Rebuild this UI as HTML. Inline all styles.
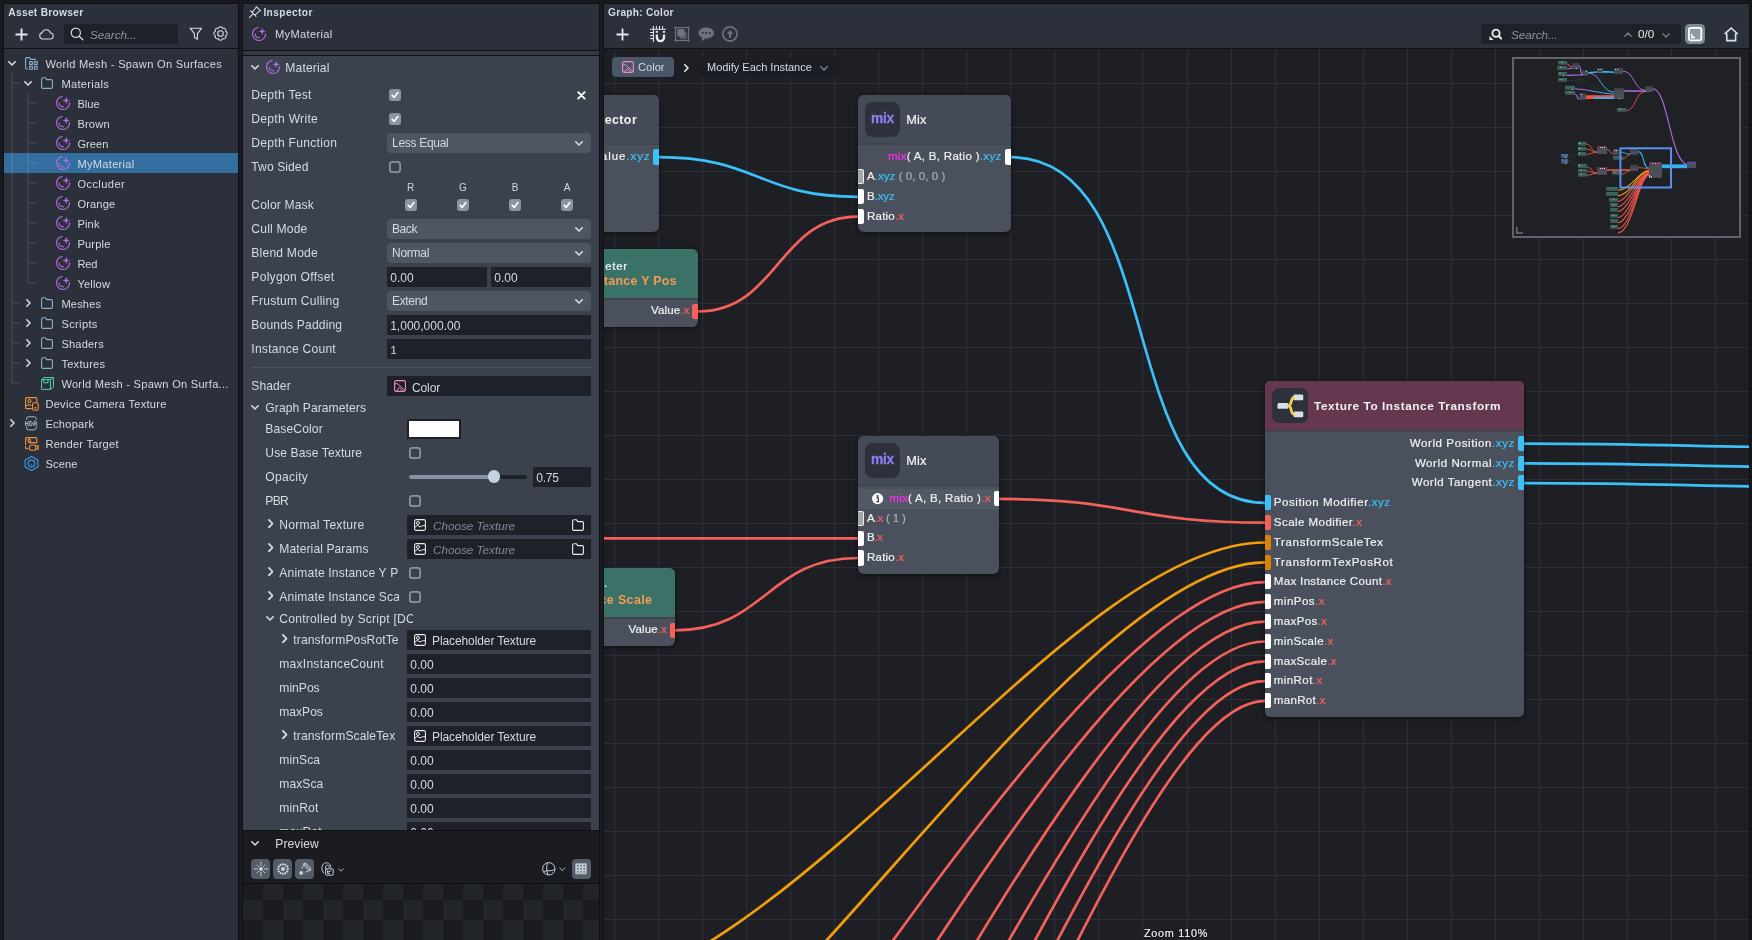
<!DOCTYPE html><html><head><meta charset="utf-8"><title>Editor</title><style>
*{box-sizing:border-box;margin:0;padding:0}
html,body{width:1752px;height:940px;overflow:hidden;background:#0f1013}
body{font-family:"Liberation Sans",sans-serif;color:#d5dae1;position:relative;font-size:11.7px}
.abs{position:absolute}
.t{position:absolute;white-space:pre;line-height:14px;height:14px}
.panel{position:absolute;background:#2c303a}
svg{position:absolute;overflow:visible}
.ic{position:absolute}
</style></head><body>
<svg width="0" height="0" style="position:absolute">
<defs>
<symbol id="mat" viewBox="0 0 14 14"><g fill="none" stroke="currentColor" stroke-width="1.1" stroke-linecap="round">
<path d="M6.19 0.53 A6.5 6.5 0 1 0 13.55 6.74"/>
<path d="M3.1 6.9 A3.9 3.9 0 0 0 7.7 10.7"/></g>
<path fill="currentColor" d="M10.2 0.9 L11.15 3.45 L13.8 4.4 L11.15 5.35 L10.2 7.9 L9.25 5.35 L6.6 4.4 L9.25 3.45 Z"/></symbol>
<symbol id="folder" viewBox="0 0 12 12"><path fill="none" stroke="currentColor" stroke-width="1.1" stroke-linejoin="round" d="M0.6 2 Q0.6 0.7 1.9 0.7 H4.2 L5.8 2.6 H10.2 Q11.4 2.6 11.4 3.8 V10.2 Q11.4 11.4 10.2 11.4 H1.8 Q0.6 11.4 0.6 10.2 Z"/></symbol>
<symbol id="pkg" viewBox="0 0 13 13"><g fill="none" stroke="currentColor" stroke-width="1.1" stroke-linejoin="round" stroke-linecap="round">
<path d="M2.6 12 H1.9 Q0.6 12 0.6 10.7 V1.9 Q0.6 0.6 1.9 0.6 H4.4 L6 2.4 H10.6"/>
<rect x="4.6" y="4.6" width="2.8" height="2.8"/><rect x="9.4" y="4.6" width="2.8" height="2.8"/><rect x="4.6" y="9.4" width="2.8" height="2.8"/><rect x="9.4" y="9.4" width="2.8" height="2.8"/></g></symbol>
<symbol id="chd" viewBox="0 0 8 5"><path fill="none" stroke="currentColor" stroke-width="1.6" stroke-linecap="round" stroke-linejoin="round" d="M0.8 0.8 L4 4 L7.2 0.8"/></symbol>
<symbol id="chr" viewBox="0 0 5 8"><path fill="none" stroke="currentColor" stroke-width="1.6" stroke-linecap="round" stroke-linejoin="round" d="M0.8 0.8 L4 4 L0.8 7.2"/></symbol>
</defs></svg>
<div style="position:absolute;left:0;top:0;width:1752px;height:940px;will-change:transform"><div class="abs" style="left:0;top:0;width:1752px;height:3px;background:#17191e"></div>
<div class="abs" style="left:0;top:0;width:3px;height:940px;background:#17191e"></div>
<div class="abs" style="left:1750px;top:0;width:2px;height:940px;background:#15171b"></div>
<div class="abs" style="left:239.2px;top:3px;width:2.5px;height:937px;background:#1a1c21"></div>
<div class="abs" style="left:600.2px;top:3px;width:2.8px;height:937px;background:#1a1c21"></div>
<div class="panel" style="left:4px;top:4px;width:234.3px;height:44px"></div>
<div class="panel" style="left:4px;top:49px;width:234.3px;height:891px"></div>
<div class="t " style="left:8.3px;top:5.6px;font-size:10.2px;letter-spacing:0.298px;font-weight:700;color:#d5dae1">Asset Browser</div>
<svg style="left:15px;top:28px" width="13" height="13"><path d="M6.5 0.5V12.5M0.5 6.5H12.5" stroke="#e3e6ea" stroke-width="1.9" fill="none"/></svg>
<svg style="left:38px;top:28px" width="16" height="12"><path d="M4.2 11 H12 A3 3 0 0 0 12.4 5 A4.3 4.3 0 0 0 4.2 4.6 A3.3 3.3 0 0 0 4.2 11 Z" stroke="#d5dae1" stroke-width="1.1" fill="none" stroke-linejoin="round"/></svg>
<div class="abs" style="left:64px;top:24px;width:114px;height:20px;background:#1e2128;border-radius:2px"></div>
<svg style="left:70px;top:27px" width="14" height="14"><circle cx="5.8" cy="5.8" r="4.6" stroke="#d5dae1" stroke-width="1.2" fill="none"/><path d="M9.2 9.2 L12.8 12.8" stroke="#d5dae1" stroke-width="1.3" stroke-linecap="round"/></svg>
<div class="t " style="left:90px;top:27.799999999999997px;font-style:italic;color:#8e96a3;font-size:11.7px">Search...</div>
<svg style="left:189px;top:27px" width="14" height="14"><path d="M1 1.2 H12.6 L8.4 6.6 V12.2 L5.4 10.6 V6.6 Z" stroke="#d5dae1" stroke-width="1.1" fill="none" stroke-linejoin="round"/></svg>
<svg style="left:212.5px;top:26.4px" width="15" height="15"><circle cx="7.5" cy="7.5" r="2.8" stroke="#d5dae1" stroke-width="1.1" fill="none"/><path d="M14.15 7.50 L14.12 7.85 L14.05 8.19 L13.92 8.52 L13.73 8.82 L13.49 9.11 L13.19 9.35 L12.78 9.53 L12.67 9.80 L12.83 10.22 L12.87 10.60 L12.84 10.97 L12.76 11.32 L12.62 11.64 L12.43 11.94 L12.20 12.20 L11.94 12.43 L11.64 12.62 L11.32 12.76 L10.97 12.84 L10.60 12.87 L10.22 12.83 L9.80 12.67 L9.53 12.78 L9.35 13.19 L9.11 13.49 L8.82 13.73 L8.52 13.92 L8.19 14.05 L7.85 14.12 L7.50 14.15 L7.15 14.12 L6.81 14.05 L6.48 13.92 L6.18 13.73 L5.89 13.49 L5.65 13.19 L5.47 12.78 L5.20 12.67 L4.78 12.83 L4.40 12.87 L4.03 12.84 L3.68 12.76 L3.36 12.62 L3.06 12.43 L2.80 12.20 L2.57 11.94 L2.38 11.64 L2.24 11.32 L2.16 10.97 L2.13 10.60 L2.17 10.22 L2.33 9.80 L2.22 9.53 L1.81 9.35 L1.51 9.11 L1.27 8.82 L1.08 8.52 L0.95 8.19 L0.88 7.85 L0.85 7.50 L0.88 7.15 L0.95 6.81 L1.08 6.48 L1.27 6.18 L1.51 5.89 L1.81 5.65 L2.22 5.47 L2.33 5.20 L2.17 4.78 L2.13 4.40 L2.16 4.03 L2.24 3.68 L2.38 3.36 L2.57 3.06 L2.80 2.80 L3.06 2.57 L3.36 2.38 L3.68 2.24 L4.03 2.16 L4.40 2.13 L4.78 2.17 L5.20 2.33 L5.47 2.22 L5.65 1.81 L5.89 1.51 L6.18 1.27 L6.48 1.08 L6.81 0.95 L7.15 0.88 L7.50 0.85 L7.85 0.88 L8.19 0.95 L8.52 1.08 L8.82 1.27 L9.11 1.51 L9.35 1.81 L9.53 2.22 L9.80 2.33 L10.22 2.17 L10.60 2.13 L10.97 2.16 L11.32 2.24 L11.64 2.38 L11.94 2.57 L12.20 2.80 L12.43 3.06 L12.62 3.36 L12.76 3.68 L12.84 4.03 L12.87 4.40 L12.83 4.78 L12.67 5.20 L12.78 5.47 L13.19 5.65 L13.49 5.89 L13.73 6.18 L13.92 6.48 L14.05 6.81 L14.12 7.15 Z" stroke="#d5dae1" stroke-width="1.05" fill="none" stroke-linejoin="round"/></svg>
<div class="abs" style="left:4px;top:153px;width:234.3px;height:20px;background:#336f9e"></div>
<div class="abs" style="left:11px;top:73px;width:2px;height:311px;background:rgba(255,255,255,0.07)"></div>
<div class="abs" style="left:27px;top:93px;width:2px;height:191px;background:rgba(255,255,255,0.07)"></div>
<div class="abs" style="left:13px;top:82px;width:7px;height:2px;background:rgba(255,255,255,0.07)"></div>
<div class="abs" style="left:13px;top:302px;width:7px;height:2px;background:rgba(255,255,255,0.07)"></div>
<div class="abs" style="left:13px;top:322px;width:7px;height:2px;background:rgba(255,255,255,0.07)"></div>
<div class="abs" style="left:13px;top:342px;width:7px;height:2px;background:rgba(255,255,255,0.07)"></div>
<div class="abs" style="left:13px;top:362px;width:7px;height:2px;background:rgba(255,255,255,0.07)"></div>
<div class="abs" style="left:13px;top:382px;width:7px;height:2px;background:rgba(255,255,255,0.07)"></div>
<div class="abs" style="left:29px;top:102px;width:7.5px;height:2px;background:rgba(255,255,255,0.07)"></div>
<div class="abs" style="left:29px;top:122px;width:7.5px;height:2px;background:rgba(255,255,255,0.07)"></div>
<div class="abs" style="left:29px;top:142px;width:7.5px;height:2px;background:rgba(255,255,255,0.07)"></div>
<div class="abs" style="left:29px;top:162px;width:7.5px;height:2px;background:rgba(255,255,255,0.07)"></div>
<div class="abs" style="left:29px;top:182px;width:7.5px;height:2px;background:rgba(255,255,255,0.07)"></div>
<div class="abs" style="left:29px;top:202px;width:7.5px;height:2px;background:rgba(255,255,255,0.07)"></div>
<div class="abs" style="left:29px;top:222px;width:7.5px;height:2px;background:rgba(255,255,255,0.07)"></div>
<div class="abs" style="left:29px;top:242px;width:7.5px;height:2px;background:rgba(255,255,255,0.07)"></div>
<div class="abs" style="left:29px;top:262px;width:7.5px;height:2px;background:rgba(255,255,255,0.07)"></div>
<div class="abs" style="left:29px;top:282px;width:7.5px;height:2px;background:rgba(255,255,255,0.07)"></div>
<svg class="ic" style="left:8px;top:61px;color:#d5dae1" width="8" height="5"><use href="#chd"/></svg>
<svg class="ic" style="left:25px;top:57px;color:#86afd1" width="13" height="13"><use href="#pkg"/></svg>
<div class="t " style="left:45.4px;top:57.099999999999994px;font-size:11.1px;letter-spacing:0.303px;">World Mesh - Spawn On Surfaces</div>
<svg class="ic" style="left:24px;top:81px;color:#d5dae1" width="8" height="5"><use href="#chd"/></svg>
<svg class="ic" style="left:41px;top:77px;color:#86afd1" width="12" height="12"><use href="#folder"/></svg>
<div class="t " style="left:61.4px;top:77.1px;font-size:11.1px;letter-spacing:0.297px;">Materials</div>
<svg class="ic" style="left:56px;top:96px;color:#b56be4" width="14" height="14"><use href="#mat"/></svg>
<div class="t " style="left:77.4px;top:97.1px;font-size:11.1px;letter-spacing:-0.004px;">Blue</div>
<svg class="ic" style="left:56px;top:116px;color:#b56be4" width="14" height="14"><use href="#mat"/></svg>
<div class="t " style="left:77.4px;top:117.1px;font-size:11.1px;letter-spacing:0.187px;">Brown</div>
<svg class="ic" style="left:56px;top:136px;color:#b56be4" width="14" height="14"><use href="#mat"/></svg>
<div class="t " style="left:77.4px;top:137.1px;font-size:11.1px;letter-spacing:0.050px;">Green</div>
<svg class="ic" style="left:56px;top:156px;color:#b56be4" width="14" height="14"><use href="#mat"/></svg>
<div class="t " style="left:77.4px;top:157.1px;font-size:11.1px;letter-spacing:0.292px;">MyMaterial</div>
<svg class="ic" style="left:56px;top:176px;color:#b56be4" width="14" height="14"><use href="#mat"/></svg>
<div class="t " style="left:77.4px;top:177.1px;font-size:11.1px;letter-spacing:0.410px;">Occluder</div>
<svg class="ic" style="left:56px;top:196px;color:#b56be4" width="14" height="14"><use href="#mat"/></svg>
<div class="t " style="left:77.4px;top:197.1px;font-size:11.1px;letter-spacing:0.163px;">Orange</div>
<svg class="ic" style="left:56px;top:216px;color:#b56be4" width="14" height="14"><use href="#mat"/></svg>
<div class="t " style="left:77.4px;top:217.1px;font-size:11.1px;letter-spacing:0.152px;">Pink</div>
<svg class="ic" style="left:56px;top:236px;color:#b56be4" width="14" height="14"><use href="#mat"/></svg>
<div class="t " style="left:77.4px;top:237.1px;font-size:11.1px;letter-spacing:0.186px;">Purple</div>
<svg class="ic" style="left:56px;top:256px;color:#b56be4" width="14" height="14"><use href="#mat"/></svg>
<div class="t " style="left:77.4px;top:257.1px;font-size:11.1px;letter-spacing:-0.121px;">Red</div>
<svg class="ic" style="left:56px;top:276px;color:#b56be4" width="14" height="14"><use href="#mat"/></svg>
<div class="t " style="left:77.4px;top:277.1px;font-size:11.1px;letter-spacing:0.170px;">Yellow</div>
<svg class="ic" style="left:26px;top:299px;color:#d5dae1" width="5" height="8"><use href="#chr"/></svg>
<svg class="ic" style="left:41px;top:297px;color:#86afd1" width="12" height="12"><use href="#folder"/></svg>
<div class="t " style="left:61.4px;top:297.1px;font-size:11.1px;letter-spacing:0.172px;">Meshes</div>
<svg class="ic" style="left:26px;top:319px;color:#d5dae1" width="5" height="8"><use href="#chr"/></svg>
<svg class="ic" style="left:41px;top:317px;color:#86afd1" width="12" height="12"><use href="#folder"/></svg>
<div class="t " style="left:61.4px;top:317.1px;font-size:11.1px;letter-spacing:0.354px;">Scripts</div>
<svg class="ic" style="left:26px;top:339px;color:#d5dae1" width="5" height="8"><use href="#chr"/></svg>
<svg class="ic" style="left:41px;top:337px;color:#86afd1" width="12" height="12"><use href="#folder"/></svg>
<div class="t " style="left:61.4px;top:337.1px;font-size:11.1px;letter-spacing:0.179px;">Shaders</div>
<svg class="ic" style="left:26px;top:359px;color:#d5dae1" width="5" height="8"><use href="#chr"/></svg>
<svg class="ic" style="left:41px;top:357px;color:#86afd1" width="12" height="12"><use href="#folder"/></svg>
<div class="t " style="left:61.4px;top:357.1px;font-size:11.1px;letter-spacing:0.244px;">Textures</div>
<svg style="left:41px;top:377px" width="13" height="13"><g fill="none" stroke="#55d2a2" stroke-width="1" stroke-linejoin="round"><path d="M0.6 2.6 H9.4 V12.4 H0.6 Z M0.6 2.6 L3 0.6 H12.4 L9.4 2.6 M12.4 0.6 V10 L9.4 12.4 M2.8 2.8 V5.8 H7 V2.8"/></g></svg>
<svg style="left:25px;top:397px" width="14" height="14"><g fill="none" stroke="#f2913a" stroke-width="1.1" stroke-linejoin="round" stroke-linecap="round"><path d="M6.4 11.6 H1.8 Q0.6 11.6 0.6 10.4 V1.8 Q0.6 0.6 1.8 0.6 H10.6 Q11.8 0.6 11.8 1.8 V4.4"/><circle cx="4.4" cy="4" r="1.5"/><path d="M0.8 9 L4 7.6 L6 8.4"/><rect x="7.6" y="5.8" width="5.6" height="7.4" rx="1.4"/></g><rect x="9.6" y="10" width="1.7" height="1.7" fill="#f2913a"/></svg>
<svg style="left:25px;top:416px" width="13" height="15"><g fill="none" stroke="#b6cde4" stroke-width="0.85" stroke-linecap="round"><path d="M1.6 3.6 V2.6 Q1.6 0.8 3.4 0.8 H9.4 Q11.2 0.8 11.2 2.6 V3.6 M1.6 11 V12 Q1.6 13.8 3.4 13.8 H9.4 Q11.2 13.8 11.2 12 V11"/><path d="M0.6 5.4 V9.8 M0.6 7.6 H3 M3 5.4 V9.8 M4.8 5.4 V9.8 H5.6 Q7.2 9.8 7.2 7.6 Q7.2 5.4 5.6 5.4 H4.8 M9 9.8 V5.4 H10.4 Q11.8 5.4 11.8 6.6 Q11.8 7.8 10.4 7.8 H9 M10.6 7.8 L12 9.8"/></g></svg>
<svg style="left:25px;top:437px" width="14" height="14"><g fill="none" stroke="#f2913a" stroke-width="1.1" stroke-linejoin="round" stroke-linecap="round"><path d="M2.8 11.6 H1.8 Q0.6 11.6 0.6 10.4 V9.4 M0.6 7.4 V1.8 Q0.6 0.6 1.8 0.6 H10.6 Q11.8 0.6 11.8 1.8 V5.6 H4"/><circle cx="4.2" cy="3.4" r="1.3"/><rect x="4.6" y="8" width="6.2" height="5.2" rx="1.3"/><path d="M10.8 9.8 L13.2 8.6 V12.6 L10.8 11.4"/></g></svg>
<svg style="left:24px;top:456px" width="15" height="15"><g fill="none" stroke="#3a9ef0" stroke-width="1.1" stroke-linejoin="round"><path d="M7.5 0.6 L13.9 4 V11 L7.5 14.4 L1.1 11 V4 Z"/><circle cx="7.5" cy="7.5" r="3.4"/><path d="M6 7.6 Q6.6 9.2 8.4 9" stroke-width="0.8"/></g></svg>
<div class="t " style="left:61.4px;top:377.1px;font-size:11.1px;letter-spacing:0.258px;">World Mesh - Spawn On Surfa...</div>
<div class="t " style="left:45.4px;top:397.1px;font-size:11.1px;letter-spacing:0.263px;">Device Camera Texture</div>
<svg class="ic" style="left:10px;top:419px;color:#d5dae1" width="5" height="8"><use href="#chr"/></svg>
<div class="t " style="left:45.4px;top:417.1px;font-size:11.1px;letter-spacing:0.251px;">Echopark</div>
<div class="t " style="left:45.4px;top:437.1px;font-size:11.1px;letter-spacing:0.251px;">Render Target</div>
<div class="t " style="left:45.4px;top:457.1px;font-size:11.1px;letter-spacing:0.145px;">Scene</div>
<div class="panel" style="left:242.8px;top:4px;width:356.5px;height:46px"></div>
<div class="panel" style="left:242.8px;top:51.2px;width:356.5px;height:3.4px;background:#343942"></div>
<div class="abs" style="left:242.8px;top:55.6px;width:356.5px;height:774.4px;background:#3c424d"></div>
<svg style="left:249.3px;top:6px" width="12" height="12"><path d="M0.4 11.6 L4.3 7.7 M1.5 4.9 L7 10.4 M3.1 6.4 L6.3 2.5 L7.5 0.9 L11.3 4.7 L9.6 5.9 L5.8 9.1" fill="none" stroke="#d5dae1" stroke-width="1.1" stroke-linejoin="round" stroke-linecap="round"/></svg>
<div class="t " style="left:263.4px;top:5.6px;font-size:10.2px;letter-spacing:0.388px;font-weight:700;">Inspector</div>
<svg class="ic" style="left:252px;top:27px;color:#b56be4" width="14" height="14"><use href="#mat"/></svg>
<div class="t " style="left:275px;top:27px;font-size:11.1px;letter-spacing:0.322px;">MyMaterial</div>
<svg class="ic" style="left:251px;top:65px;color:#d5dae1" width="8" height="5"><use href="#chd"/></svg>
<svg class="ic" style="left:266px;top:60px;color:#b56be4" width="14" height="14"><use href="#mat"/></svg>
<div class="t " style="left:285.3px;top:60.5px;font-size:12.1px;letter-spacing:0.158px;">Material</div>
<div class="t " style="left:251.3px;top:87.5px;font-size:12.1px;letter-spacing:0.278px;">Depth Test</div>
<div class="t " style="left:251.3px;top:111.5px;font-size:12.1px;letter-spacing:0.285px;">Depth Write</div>
<div class="t " style="left:251.3px;top:135.5px;font-size:12.1px;letter-spacing:0.274px;">Depth Function</div>
<div class="t " style="left:251.3px;top:159.5px;font-size:12.1px;letter-spacing:0.078px;">Two Sided</div>
<div class="t " style="left:251.3px;top:197.5px;font-size:12.1px;letter-spacing:0.151px;">Color Mask</div>
<div class="t " style="left:251.3px;top:221.5px;font-size:12.1px;letter-spacing:0.192px;">Cull Mode</div>
<div class="t " style="left:251.3px;top:245.5px;font-size:12.1px;letter-spacing:0.212px;">Blend Mode</div>
<div class="t " style="left:251.3px;top:269.5px;font-size:12.1px;letter-spacing:0.282px;">Polygon Offset</div>
<div class="t " style="left:251.3px;top:293.5px;font-size:12.1px;letter-spacing:0.232px;">Frustum Culling</div>
<div class="t " style="left:251.3px;top:317.5px;font-size:12.1px;letter-spacing:0.157px;">Bounds Padding</div>
<div class="t " style="left:251.3px;top:341.5px;font-size:12.1px;letter-spacing:0.236px;">Instance Count</div>
<div class="t " style="left:251.3px;top:378.5px;font-size:12.1px;letter-spacing:0.080px;">Shader</div>
<div class="abs" style="left:389px;top:89px;width:12px;height:12px;border-radius:3px;background:#8a94a2"></div><svg style="left:389px;top:89px" width="12" height="12"><path d="M3.2 6.2 L5.2 8.4 L8.8 3.6" stroke="#fff" stroke-width="1.7" fill="none" stroke-linecap="round" stroke-linejoin="round"/></svg>
<div class="abs" style="left:389px;top:113px;width:12px;height:12px;border-radius:3px;background:#8a94a2"></div><svg style="left:389px;top:113px" width="12" height="12"><path d="M3.2 6.2 L5.2 8.4 L8.8 3.6" stroke="#fff" stroke-width="1.7" fill="none" stroke-linecap="round" stroke-linejoin="round"/></svg>
<div class="abs" style="left:389px;top:161px;width:12px;height:12px;border-radius:3.5px;box-shadow:inset 0 0 0 1.7px #8a94a2"></div>
<svg style="left:576.5px;top:90.7px" width="9" height="9"><path d="M1.2 1.2 L7.6 7.6 M7.6 1.2 L1.2 7.6" stroke="#fff" stroke-width="1.9" stroke-linecap="round"/></svg>
<div class="abs" style="left:387px;top:133px;width:204px;height:20px;background:#4e5662;border-radius:4px"></div><div class="t " style="left:392px;top:135.8px;font-size:12px;letter-spacing:-0.297px;">Less Equal</div><svg class="ic" style="left:575px;top:141px;color:#d5dae1" width="8" height="5"><use href="#chd"/></svg>
<div class="t" style="left:400.5px;top:180.5px;width:20px;text-align:center;font-size:10px;color:#cfd7e1">R</div>
<div class="abs" style="left:404.5px;top:199px;width:12px;height:12px;border-radius:3px;background:#8a94a2"></div><svg style="left:404.5px;top:199px" width="12" height="12"><path d="M3.2 6.2 L5.2 8.4 L8.8 3.6" stroke="#fff" stroke-width="1.7" fill="none" stroke-linecap="round" stroke-linejoin="round"/></svg>
<div class="t" style="left:453px;top:180.5px;width:20px;text-align:center;font-size:10px;color:#cfd7e1">G</div>
<div class="abs" style="left:457px;top:199px;width:12px;height:12px;border-radius:3px;background:#8a94a2"></div><svg style="left:457px;top:199px" width="12" height="12"><path d="M3.2 6.2 L5.2 8.4 L8.8 3.6" stroke="#fff" stroke-width="1.7" fill="none" stroke-linecap="round" stroke-linejoin="round"/></svg>
<div class="t" style="left:505px;top:180.5px;width:20px;text-align:center;font-size:10px;color:#cfd7e1">B</div>
<div class="abs" style="left:509px;top:199px;width:12px;height:12px;border-radius:3px;background:#8a94a2"></div><svg style="left:509px;top:199px" width="12" height="12"><path d="M3.2 6.2 L5.2 8.4 L8.8 3.6" stroke="#fff" stroke-width="1.7" fill="none" stroke-linecap="round" stroke-linejoin="round"/></svg>
<div class="t" style="left:557px;top:180.5px;width:20px;text-align:center;font-size:10px;color:#cfd7e1">A</div>
<div class="abs" style="left:561px;top:199px;width:12px;height:12px;border-radius:3px;background:#8a94a2"></div><svg style="left:561px;top:199px" width="12" height="12"><path d="M3.2 6.2 L5.2 8.4 L8.8 3.6" stroke="#fff" stroke-width="1.7" fill="none" stroke-linecap="round" stroke-linejoin="round"/></svg>
<div class="abs" style="left:387px;top:219px;width:204px;height:20px;background:#4e5662;border-radius:4px"></div><div class="t " style="left:392px;top:221.8px;font-size:12px;letter-spacing:-0.419px;">Back</div><svg class="ic" style="left:575px;top:227px;color:#d5dae1" width="8" height="5"><use href="#chd"/></svg>
<div class="abs" style="left:387px;top:243px;width:204px;height:20px;background:#4e5662;border-radius:4px"></div><div class="t " style="left:392px;top:245.8px;font-size:12px;letter-spacing:-0.245px;">Normal</div><svg class="ic" style="left:575px;top:251px;color:#d5dae1" width="8" height="5"><use href="#chd"/></svg>
<div class="abs" style="left:387px;top:267px;width:100px;height:20px;background:#1e2128;border-radius:1px"></div><div class="t " style="left:390.2px;top:271px;font-size:12px;letter-spacing:0.061px;">0.00</div>
<div class="abs" style="left:491px;top:267px;width:100px;height:20px;background:#1e2128;border-radius:1px"></div><div class="t " style="left:494.2px;top:271px;font-size:12px;letter-spacing:0.061px;">0.00</div>
<div class="abs" style="left:387px;top:291px;width:204px;height:20px;background:#4e5662;border-radius:4px"></div><div class="t " style="left:392px;top:293.8px;font-size:12px;letter-spacing:-0.343px;">Extend</div><svg class="ic" style="left:575px;top:299px;color:#d5dae1" width="8" height="5"><use href="#chd"/></svg>
<div class="abs" style="left:387px;top:315px;width:204px;height:20px;background:#1e2128;border-radius:1px"></div><div class="t " style="left:390.2px;top:319px;font-size:12px;letter-spacing:0.011px;">1,000,000.00</div>
<div class="abs" style="left:387px;top:339px;width:204px;height:20px;background:#1e2128;border-radius:1px"></div><div class="t " style="left:390.2px;top:343px;font-size:11.8px">1</div>
<div class="abs" style="left:251px;top:367px;width:340px;height:1px;background:#4d535f"></div>
<div class="abs" style="left:387px;top:376px;width:204px;height:20px;background:#1e2128;border-radius:1px"></div><div class="t " style="left:390.2px;top:380px;font-size:11.8px"></div>
<svg style="left:394px;top:380px" width="12" height="12"><rect x="0.6" y="0.6" width="10.8" height="10.8" rx="1.6" fill="none" stroke="#f08bc4" stroke-width="1.1"/><path d="M0.8 4.2 Q3 2.6 4.6 4.6 L11 10.6 M2.6 11 L5.4 7.4 L8.4 10.8" fill="none" stroke="#f08bc4" stroke-width="1"/></svg>
<div class="t " style="left:412px;top:380.6px;font-size:12px;letter-spacing:-0.115px;">Color</div>
<svg class="ic" style="left:251px;top:405px;color:#d5dae1" width="8" height="5"><use href="#chd"/></svg>
<div class="t " style="left:265.3px;top:401px;font-size:12.1px;letter-spacing:0.079px;">Graph Parameters</div>
<div class="t " style="left:265.3px;top:421.5px;font-size:12.1px;letter-spacing:0.112px;">BaseColor</div>
<div class="t " style="left:265.3px;top:445.5px;font-size:12.1px;letter-spacing:0.101px;">Use Base Texture</div>
<div class="t " style="left:265.3px;top:469.5px;font-size:12.1px;letter-spacing:0.254px;">Opacity</div>
<div class="t " style="left:265.3px;top:493.5px;font-size:12.1px;letter-spacing:-0.693px;">PBR</div>
<div class="abs" style="left:407px;top:419px;width:54px;height:20px;background:#fff;border:2px solid #1d2026"></div>
<div class="abs" style="left:409px;top:447px;width:12px;height:12px;border-radius:3.5px;box-shadow:inset 0 0 0 1.7px #8a94a2"></div>
<div class="abs" style="left:409px;top:475.2px;width:118px;height:3.6px;border-radius:2px;background:#1e2128"></div>
<div class="abs" style="left:409px;top:475.2px;width:86px;height:3.6px;border-radius:2px;background:#8494a5"></div>
<div class="abs" style="left:487.6px;top:470.3px;width:12.4px;height:12.4px;border-radius:6.2px;background:#c5d2e0"></div>
<div class="abs" style="left:533px;top:467px;width:58px;height:20px;background:#1e2128;border-radius:1px"></div><div class="t " style="left:536.2px;top:471px;font-size:12px;letter-spacing:-0.214px;">0.75</div>
<div class="abs" style="left:409px;top:495px;width:12px;height:12px;border-radius:3.5px;box-shadow:inset 0 0 0 1.7px #8a94a2"></div>
<svg class="ic" style="left:268px;top:519.4px;color:#d5dae1" width="5.7" height="9.2"><use href="#chr"/></svg>
<div class="t " style="left:279.3px;top:517.5px;font-size:12.1px;letter-spacing:0.242px;">Normal Texture</div>
<div class="abs" style="left:407px;top:515px;width:184px;height:20px;background:#1e2128;border-radius:1px"></div><div class="t " style="left:410.2px;top:519px;font-size:11.8px"></div>
<svg style="left:414.3px;top:519px" width="12" height="12"><rect x="0.6" y="0.6" width="10.8" height="10.8" rx="1.6" fill="none" stroke="#e8eaee" stroke-width="1.1"/><circle cx="4" cy="4" r="1.5" fill="none" stroke="#e8eaee" stroke-width="1"/><path d="M0.8 8.2 L3.4 6.4 L6 8 Q8 6.2 11.2 6.6" fill="none" stroke="#e8eaee" stroke-width="1"/></svg>
<div class="t " style="left:433px;top:519px;font-style:italic;color:#808996;font-size:11.7px">Choose Texture</div>
<svg class="ic" style="left:572px;top:519px;color:#e8eaee" width="12" height="12"><use href="#folder"/></svg>
<svg class="ic" style="left:268px;top:543.4px;color:#d5dae1" width="5.7" height="9.2"><use href="#chr"/></svg>
<div class="t " style="left:279.3px;top:541.5px;font-size:12.1px;letter-spacing:0.081px;">Material Params</div>
<div class="abs" style="left:407px;top:539px;width:184px;height:20px;background:#1e2128;border-radius:1px"></div><div class="t " style="left:410.2px;top:543px;font-size:11.8px"></div>
<svg style="left:414.3px;top:543px" width="12" height="12"><rect x="0.6" y="0.6" width="10.8" height="10.8" rx="1.6" fill="none" stroke="#e8eaee" stroke-width="1.1"/><circle cx="4" cy="4" r="1.5" fill="none" stroke="#e8eaee" stroke-width="1"/><path d="M0.8 8.2 L3.4 6.4 L6 8 Q8 6.2 11.2 6.6" fill="none" stroke="#e8eaee" stroke-width="1"/></svg>
<div class="t " style="left:433px;top:543px;font-style:italic;color:#808996;font-size:11.7px">Choose Texture</div>
<svg class="ic" style="left:572px;top:543px;color:#e8eaee" width="12" height="12"><use href="#folder"/></svg>
<svg class="ic" style="left:268px;top:567.4px;color:#d5dae1" width="5.7" height="9.2"><use href="#chr"/></svg>
<div class="t " style="left:279.3px;top:565.5px;font-size:12.1px;letter-spacing:0.161px;width:120px;overflow:hidden">Animate Instance Y Pos</div>
<div class="abs" style="left:409px;top:567px;width:12px;height:12px;border-radius:3.5px;box-shadow:inset 0 0 0 1.7px #8a94a2"></div>
<svg class="ic" style="left:268px;top:591.4px;color:#d5dae1" width="5.7" height="9.2"><use href="#chr"/></svg>
<div class="t " style="left:279.3px;top:589.5px;font-size:12.1px;letter-spacing:0.161px;width:120px;overflow:hidden">Animate Instance Scale</div>
<div class="abs" style="left:409px;top:591px;width:12px;height:12px;border-radius:3.5px;box-shadow:inset 0 0 0 1.7px #8a94a2"></div>
<svg class="ic" style="left:266px;top:616px;color:#d5dae1" width="8" height="5"><use href="#chd"/></svg>
<div class="t " style="left:279.3px;top:611.5px;font-size:12.1px;letter-spacing:0.250px;width:133.7px;overflow:hidden">Controlled by Script [DO NOT EDIT]</div>
<svg class="ic" style="left:282px;top:634.4px;color:#d5dae1" width="5.7" height="9.2"><use href="#chr"/></svg>
<div class="t " style="left:293.3px;top:632.5px;font-size:12.1px;letter-spacing:0.112px;width:105.2px;overflow:hidden">transformPosRotTex</div>
<div class="abs" style="left:407px;top:630px;width:184px;height:20px;background:#1e2128;border-radius:1px"></div><div class="t " style="left:410.2px;top:634px;font-size:11.8px"></div>
<svg style="left:414.3px;top:634px" width="12" height="12"><rect x="0.6" y="0.6" width="10.8" height="10.8" rx="1.6" fill="none" stroke="#e8eaee" stroke-width="1.1"/><circle cx="4" cy="4" r="1.5" fill="none" stroke="#e8eaee" stroke-width="1"/><path d="M0.8 8.2 L3.4 6.4 L6 8 Q8 6.2 11.2 6.6" fill="none" stroke="#e8eaee" stroke-width="1"/></svg>
<div class="t " style="left:432px;top:634px;font-size:12px;letter-spacing:-0.097px;">Placeholder Texture</div>
<svg class="ic" style="left:282px;top:730.4px;color:#d5dae1" width="5.7" height="9.2"><use href="#chr"/></svg>
<div class="t " style="left:293.3px;top:728.5px;font-size:12.1px;letter-spacing:0.112px;width:105.2px;overflow:hidden">transformScaleTex</div>
<div class="abs" style="left:407px;top:726px;width:184px;height:20px;background:#1e2128;border-radius:1px"></div><div class="t " style="left:410.2px;top:730px;font-size:11.8px"></div>
<svg style="left:414.3px;top:730px" width="12" height="12"><rect x="0.6" y="0.6" width="10.8" height="10.8" rx="1.6" fill="none" stroke="#e8eaee" stroke-width="1.1"/><circle cx="4" cy="4" r="1.5" fill="none" stroke="#e8eaee" stroke-width="1"/><path d="M0.8 8.2 L3.4 6.4 L6 8 Q8 6.2 11.2 6.6" fill="none" stroke="#e8eaee" stroke-width="1"/></svg>
<div class="t " style="left:432px;top:730px;font-size:12px;letter-spacing:-0.097px;">Placeholder Texture</div>
<div class="t " style="left:279.3px;top:656.5px;font-size:12.1px;letter-spacing:0.226px;">maxInstanceCount</div>
<div class="abs" style="left:407px;top:654px;width:184px;height:20px;background:#1e2128;border-radius:1px"></div><div class="t " style="left:410.2px;top:658px;font-size:12px;letter-spacing:0.061px;">0.00</div>
<div class="t " style="left:279.3px;top:680.5px;font-size:12.1px;letter-spacing:0.009px;">minPos</div>
<div class="abs" style="left:407px;top:678px;width:184px;height:20px;background:#1e2128;border-radius:1px"></div><div class="t " style="left:410.2px;top:682px;font-size:12px;letter-spacing:0.061px;">0.00</div>
<div class="t " style="left:279.3px;top:704.5px;font-size:12.1px;letter-spacing:-0.018px;">maxPos</div>
<div class="abs" style="left:407px;top:702px;width:184px;height:20px;background:#1e2128;border-radius:1px"></div><div class="t " style="left:410.2px;top:706px;font-size:12px;letter-spacing:0.061px;">0.00</div>
<div class="t " style="left:279.3px;top:752.5px;font-size:12.1px;letter-spacing:0.092px;">minSca</div>
<div class="abs" style="left:407px;top:750px;width:184px;height:20px;background:#1e2128;border-radius:1px"></div><div class="t " style="left:410.2px;top:754px;font-size:12px;letter-spacing:0.061px;">0.00</div>
<div class="t " style="left:279.3px;top:776.5px;font-size:12.1px;letter-spacing:0.065px;">maxSca</div>
<div class="abs" style="left:407px;top:774px;width:184px;height:20px;background:#1e2128;border-radius:1px"></div><div class="t " style="left:410.2px;top:778px;font-size:12px;letter-spacing:0.061px;">0.00</div>
<div class="t " style="left:279.3px;top:800.5px;font-size:12.1px;letter-spacing:0.146px;">minRot</div>
<div class="abs" style="left:407px;top:798px;width:184px;height:20px;background:#1e2128;border-radius:1px"></div><div class="t " style="left:410.2px;top:802px;font-size:12px;letter-spacing:0.061px;">0.00</div>
<div class="t " style="left:279.3px;top:824.5px;font-size:12.1px;letter-spacing:0.119px;">maxRot</div>
<div class="abs" style="left:407px;top:822px;width:184px;height:20px;background:#1e2128;border-radius:1px"></div><div class="t " style="left:410.2px;top:826px;font-size:12px;letter-spacing:0.061px;">0.00</div>
<div class="abs" style="left:242.8px;top:830px;width:356.5px;height:110px;background:#0f1013"></div>
<div class="abs" style="left:242.8px;top:831px;width:356.5px;height:52.3px;background:#1a1c21"></div>
<svg class="ic" style="left:251px;top:841px;color:#d5dae1" width="8" height="5"><use href="#chd"/></svg>
<div class="t " style="left:275.3px;top:836.5px;font-size:12.1px;letter-spacing:0.066px;">Preview</div>
<div class="abs" style="left:251.2px;top:859px;width:19.3px;height:19.7px;border-radius:4px;background:#545c68"></div>
<div class="abs" style="left:273.1px;top:859px;width:19.3px;height:19.7px;border-radius:4px;background:#545c68"></div>
<div class="abs" style="left:295.1px;top:859px;width:19.3px;height:19.7px;border-radius:4px;background:#545c68"></div>
<div class="abs" style="left:572px;top:859.2px;width:18.5px;height:19.4px;border-radius:4px;background:#545c68"></div>
<svg style="left:250.8px;top:859px" width="20" height="20"><circle cx="10" cy="10" r="1.9" fill="#c8d4e0"/><path d="M13.30 10.00 L17.00 10.00 M12.33 12.33 L13.96 13.96 M10.00 13.30 L10.00 17.00 M7.67 12.33 L6.04 13.96 M6.70 10.00 L3.00 10.00 M7.67 7.67 L6.04 6.04 M10.00 6.70 L10.00 3.00 M12.33 7.67 L13.96 6.04 " stroke="#c8d4e0" stroke-width="0.9" stroke-linecap="round"/></svg>
<svg style="left:273px;top:859px" width="20" height="20"><circle cx="10" cy="10" r="4.4" fill="none" stroke="#c8d4e0" stroke-width="1"/><circle cx="10" cy="10" r="2" fill="#c8d4e0"/><path d="M14.60 10.00 L16.00 10.00 M13.98 12.30 L15.20 13.00 M12.30 13.98 L13.00 15.20 M10.00 14.60 L10.00 16.00 M7.70 13.98 L7.00 15.20 M6.02 12.30 L4.80 13.00 M5.40 10.00 L4.00 10.00 M6.02 7.70 L4.80 7.00 M7.70 6.02 L7.00 4.80 M10.00 5.40 L10.00 4.00 M12.30 6.02 L13.00 4.80 M13.98 7.70 L15.20 7.00 " stroke="#c8d4e0" stroke-width="1.5"/></svg>
<svg style="left:295px;top:859px" width="20" height="20"><circle cx="6.2" cy="13.9" r="1.9" fill="#c8d4e0"/><g fill="none" stroke="#c8d4e0" stroke-width="0.9" stroke-linejoin="round"><path d="M6.8 10 L9.2 4.2 L15.4 11.2 L10.4 13.2"/><ellipse cx="12.3" cy="7.7" rx="1.6" ry="4.7" transform="rotate(-42 12.3 7.7)"/></g></svg>
<svg style="left:321px;top:862px" width="13" height="14"><g fill="none" stroke="#c8d4e0" stroke-width="1" stroke-linecap="round"><path d="M2.6 11 C0.2 8 0.2 3 3.2 1.4 C6 -0.2 9.6 1.4 9.8 5.2 M4.4 6.2 C4 4.4 5 3.2 6.4 3.2 C7.8 3.2 8.2 4.2 8.2 5.4"/><rect x="4.6" y="6.8" width="7.6" height="6.4" rx="1"/><path d="M6.6 8.6 V11.4 H8.4 M6.8 10 L10 8.8"/></g></svg>
<svg style="left:337.5px;top:867.6px" width="6" height="4"><path d="M0.5 0.5 L3 3.2 L5.5 0.5" fill="none" stroke="#aab4c0" stroke-width="1"/></svg>
<svg style="left:542px;top:862px" width="14" height="14"><g fill="none" stroke="#c8d4e0" stroke-width="1"><circle cx="6.8" cy="6.8" r="6.2"/><path d="M5.6 0.8 C4.2 4 4.4 9 6 13 M4.8 8.6 C8 9.2 11.4 8.4 12.8 7 M1.6 10.2 L4.8 8.4"/></g></svg>
<svg style="left:559px;top:867.3px" width="7" height="4.5"><path d="M0.5 0.5 L3.3 3.6 L6.1 0.5" fill="none" stroke="#aab4c0" stroke-width="1"/></svg>
<svg style="left:575.1px;top:863.3px" width="12" height="11.5"><rect x="0" y="0" width="12" height="11.5" rx="1.6" fill="#9aa8b7"/><rect x="1.2" y="1.2" width="9.6" height="9.1" fill="#c3d0dc"/><rect x="2.3" y="2.2" width="1.4" height="1.3" fill="#4a525e"/><rect x="2.3" y="5.2" width="1.4" height="1.3" fill="#4a525e"/><rect x="2.3" y="8.2" width="1.4" height="1.3" fill="#4a525e"/><rect x="5.4" y="2.2" width="1.4" height="1.3" fill="#4a525e"/><rect x="5.4" y="5.2" width="1.4" height="1.3" fill="#4a525e"/><rect x="5.4" y="8.2" width="1.4" height="1.3" fill="#4a525e"/><rect x="8.5" y="2.2" width="1.4" height="1.3" fill="#4a525e"/><rect x="8.5" y="5.2" width="1.4" height="1.3" fill="#4a525e"/><rect x="8.5" y="8.2" width="1.4" height="1.3" fill="#4a525e"/></svg>
<div class="abs" style="left:242.8px;top:883.2px;width:356.5px;height:1px;background:#0c0d10"></div>
<div class="abs" style="left:242.8px;top:884.2px;width:356.5px;height:56px;background-color:#1a1c21;background-image:conic-gradient(#22252a 25%,#1a1c21 0 50%,#22252a 0 75%,#1a1c21 0);background-size:40px 40px;background-position:0px -4px"></div>
<div class="panel" style="left:604px;top:4px;width:1145px;height:43.8px"></div>
<div class="t " style="left:608px;top:5.6px;font-weight:700;font-size:10.2px;letter-spacing:0.25px">Graph: Color</div>
<div class="abs" style="left:604px;top:49px;width:1145px;height:891px;background:#1d1f25"></div>
<svg style="left:0;top:0" width="1752" height="940" shape-rendering="crispEdges"><path d="M614.5 49V940M658.5 49V940M702.5 49V940M746.5 49V940M790.5 49V940M834.5 49V940M878.5 49V940M922.5 49V940M966.5 49V940M1010.5 49V940M1054.5 49V940M1098.5 49V940M1142.5 49V940M1187.5 49V940M1231.5 49V940M1275.5 49V940M1319.5 49V940M1363.5 49V940M1407.5 49V940M1451.5 49V940M1495.5 49V940M1539.5 49V940M1583.5 49V940M1627.5 49V940M1671.5 49V940M1715.5 49V940M604 83.5H1749M604 127.5H1749M604 171.5H1749M604 215.5H1749M604 259.5H1749M604 303.5H1749M604 347.5H1749M604 391.5H1749M604 435.5H1749M604 479.5H1749M604 523.5H1749M604 567.5H1749M604 611.5H1749M604 655.5H1749M604 699.5H1749M604 743.5H1749M604 787.5H1749M604 831.5H1749M604 875.5H1749M604 919.5H1749" stroke="#2c2f36" stroke-width="1" fill="none"/></svg>
<div class="abs" style="left:0;top:0;width:1752px;height:940px;clip-path:inset(49px 3px 0 604px)">
<svg style="left:0;top:0" width="1752" height="940"><path d="M658.8 157.2 C758.4 157.2 758.4 196.8 858 196.8" stroke="#3bc1f7" stroke-width="2.7" fill="none"/><path d="M1010.5 157.2 C1169.4 157.2 1112 502.9 1265 502.9" stroke="#3bc1f7" stroke-width="2.7" fill="none"/><path d="M697.9 311.5 C777.95 311.5 777.95 216.6 858 216.6" stroke="#f4605a" stroke-width="2.7" fill="none"/><path d="M999 498.9 C1132.0 498.9 1132.0 522.7 1265 522.7" stroke="#f4605a" stroke-width="2.7" fill="none"/><path d="M600 538.3 H858" stroke="#f4605a" stroke-width="2.7"/><path d="M675 630.4 C766.5 630.4 766.5 558.0 858 558.0" stroke="#f4605a" stroke-width="2.7" fill="none"/><path d="M1523 443.6 C1640 443.6 1690 446.20000000000005 1760 446.90000000000003" stroke="#3bc1f7" stroke-width="2.7" fill="none"/><path d="M1523 463.4 C1640 463.4 1690 466.0 1760 466.7" stroke="#3bc1f7" stroke-width="2.7" fill="none"/><path d="M1523 483.2 C1640 483.2 1690 485.8 1760 486.5" stroke="#3bc1f7" stroke-width="2.7" fill="none"/><path d="M536.9 1002.1 C785.8 1002.1 1063.2 542.5 1265 542.5" stroke="#f29d0a" stroke-width="2.7" fill="none"/><path d="M647.5 1085.7 C761.9 1085.7 1081.9 562.3 1265 562.3" stroke="#f29d0a" stroke-width="2.7" fill="none"/><path d="M710.1 1168.8 C763.0 1168.8 1087.3 582.1 1265 582.1" stroke="#f4605a" stroke-width="2.7" fill="none"/><path d="M696.2 1295.4 C747.5 1295.4 1084.2 601.9 1265 601.9" stroke="#f4605a" stroke-width="2.7" fill="none"/><path d="M566.2 1538.5 C704.5 1538.5 1070.1 621.7 1265 621.7" stroke="#f4605a" stroke-width="2.7" fill="none"/><path d="M486.3 1597.4 C763.8 1597.4 1071.5 641.5 1265 641.5" stroke="#f4605a" stroke-width="2.7" fill="none"/><path d="M421.9 1889.3 C687.7 1889.3 1059.3 661.3 1265 661.3" stroke="#f4605a" stroke-width="2.7" fill="none"/><path d="M333.1 1964.1 C715.4 1964.1 1065.9 681.1 1265 681.1" stroke="#f4605a" stroke-width="2.7" fill="none"/><path d="M411.2 2004.1 C729.0 2004.1 1074.8 700.9 1265 700.9" stroke="#f4605a" stroke-width="2.7" fill="none"/></svg>
<div class="abs" style="left:560px;top:95px;width:98.8px;height:137px;background:#4b515c;border-radius:6px;box-shadow:0 1px 4px rgba(0,0,0,.55);overflow:hidden"><div style="box-sizing:content-box;height:48px;background:#454a57;border-bottom:2px solid #40444e"></div></div>
<div class="t" style="right:1114.86px;top:112.5px;font-size:12.4px;letter-spacing:0.436px;color:#f1f2f4;-webkit-text-stroke:0.2px currentColor;font-weight:700;-webkit-text-stroke:0;">ector</div>
<div class="t" style="right:1101.46px;top:149.2px;font-size:11.5px;letter-spacing:0.944px;color:#f1f2f4;-webkit-text-stroke:0.2px currentColor;">Value<span style="color:#3bc1f7">.xyz</span></div>
<div class="abs" style="left:653.3px;top:149.40px;width:5.5px;height:15.2px;background:#3bc1f7;border-radius:2px 0 0 2px;"></div>
<div class="abs" style="left:858px;top:95px;width:152.7px;height:137px;background:#4b515c;border-radius:6px;box-shadow:0 1px 4px rgba(0,0,0,.55);overflow:hidden"><div style="box-sizing:content-box;height:48px;background:#454a57;border-bottom:2px solid #40444e"></div></div>
<div class="t" style="right:750.49px;top:149.3px;font-size:11.5px;letter-spacing:0.309px;color:#f1f2f4;-webkit-text-stroke:0.2px currentColor;"><span style="color:#ff2bf2">mix</span>( A, B, Ratio )<span style="color:#3bc1f7">.xyz</span></div>
<div class="abs" style="left:1005.2px;top:149.40px;width:5.5px;height:15.2px;background:#ffffff;border-radius:2px 0 0 2px;"></div>
<div class="t" style="left:867px;top:168.9px;font-size:11.5px;letter-spacing:0.063px;color:#f1f2f4;-webkit-text-stroke:0.2px currentColor;">A<span style="color:#3bc1f7">.xyz</span><span style="color:#a9afb8"> ( 0, 0, 0 )</span></div>
<div class="abs" style="left:858px;top:169.20px;width:5.5px;height:15.2px;background:#a3a7ae;border-radius:0 2px 2px 0;border:1px solid #ececec;border-left:none;"></div>
<div class="t" style="left:867px;top:188.79999999999998px;font-size:11.5px;letter-spacing:-0.123px;color:#f1f2f4;-webkit-text-stroke:0.2px currentColor;">B<span style="color:#3bc1f7">.xyz</span></div>
<div class="abs" style="left:858px;top:189.00px;width:5.5px;height:15.2px;background:#ffffff;border-radius:0 2px 2px 0;"></div>
<div class="t" style="left:867px;top:208.5px;font-size:11.5px;letter-spacing:0.215px;color:#f1f2f4;-webkit-text-stroke:0.2px currentColor;">Ratio<span style="color:#f4605a">.x</span></div>
<div class="abs" style="left:858px;top:208.80px;width:5.5px;height:15.2px;background:#ffffff;border-radius:0 2px 2px 0;"></div>
<div class="abs" style="left:858px;top:436px;width:141px;height:137.7px;background:#4b515c;border-radius:6px;box-shadow:0 1px 4px rgba(0,0,0,.55);overflow:hidden"><div style="box-sizing:content-box;height:48px;background:#454a57;border-bottom:2px solid #40444e"></div></div>
<div class="abs" style="left:858px;top:488.5px;width:141px;height:20px;background:#525864"></div>
<svg style="left:872.3px;top:493.4px" width="11.2" height="11.2"><circle cx="5.6" cy="5.6" r="5.6" fill="#fff"/><circle cx="5.6" cy="2.9" r="1" fill="#333"/><path d="M4.4 4.9 H6.3 V8.7 M4.4 8.7 H7.1" stroke="#333" stroke-width="1.2" fill="none"/></svg>
<div class="t" style="right:761.29px;top:490.90000000000003px;font-size:11.5px;letter-spacing:0.309px;color:#f1f2f4;-webkit-text-stroke:0.2px currentColor;"><span style="color:#ff2bf2">mix</span>( A, B, Ratio )<span style="color:#f4605a">.x</span></div>
<div class="abs" style="left:993.5px;top:491.00px;width:5.5px;height:15.2px;background:#ffffff;border-radius:2px 0 0 2px;"></div>
<div class="t" style="left:867px;top:510.5px;font-size:11.5px;letter-spacing:-0.184px;color:#f1f2f4;-webkit-text-stroke:0.2px currentColor;">A<span style="color:#f4605a">.x</span><span style="color:#a9afb8"> ( 1 )</span></div>
<div class="abs" style="left:858px;top:510.80px;width:5.5px;height:15.2px;background:#a3a7ae;border-radius:0 2px 2px 0;border:1px solid #ececec;border-left:none;"></div>
<div class="t" style="left:867px;top:530.4000000000001px;font-size:11.5px;letter-spacing:-0.372px;color:#f1f2f4;-webkit-text-stroke:0.2px currentColor;">B<span style="color:#f4605a">.x</span></div>
<div class="abs" style="left:858px;top:530.60px;width:5.5px;height:15.2px;background:#ffffff;border-radius:0 2px 2px 0;"></div>
<div class="t" style="left:867px;top:550.1px;font-size:11.5px;letter-spacing:0.215px;color:#f1f2f4;-webkit-text-stroke:0.2px currentColor;">Ratio<span style="color:#f4605a">.x</span></div>
<div class="abs" style="left:858px;top:550.40px;width:5.5px;height:15.2px;background:#ffffff;border-radius:0 2px 2px 0;"></div>
<div class="abs" style="left:865px;top:102px;width:35px;height:35px;border-radius:8px;background:#2e313b"></div>
<div class="t" style="left:865px;top:111.5px;width:35px;text-align:center;font-weight:700;font-size:13.8px;color:#8e7df0;letter-spacing:-0.2px;-webkit-text-stroke:0.3px #8e7df0">mix</div>
<div class="t" style="left:906.2px;top:112.5px;font-size:12.8px;letter-spacing:0.198px;color:#f1f2f4;-webkit-text-stroke:0.2px currentColor;">Mix</div>
<div class="abs" style="left:865px;top:443px;width:35px;height:35px;border-radius:8px;background:#2e313b"></div>
<div class="t" style="left:865px;top:452.5px;width:35px;text-align:center;font-weight:700;font-size:13.8px;color:#8e7df0;letter-spacing:-0.2px;-webkit-text-stroke:0.3px #8e7df0">mix</div>
<div class="t" style="left:906.2px;top:453.5px;font-size:12.8px;letter-spacing:0.198px;color:#f1f2f4;-webkit-text-stroke:0.2px currentColor;">Mix</div>
<div class="abs" style="left:560px;top:249px;width:138px;height:78px;background:#4b515c;border-radius:6px;box-shadow:0 1px 4px rgba(0,0,0,.55);overflow:hidden"><div style="box-sizing:content-box;height:49px;background:#3a7268;border-bottom:2px solid #40444e"></div></div>
<div class="t" style="right:1124.35px;top:259px;font-size:11.5px;letter-spacing:0.646px;color:#f1f2f4;-webkit-text-stroke:0.2px currentColor;">eter</div>
<div class="t" style="right:1075.21px;top:273.5px;font-size:12.4px;letter-spacing:0.287px;color:#f1f2f4;-webkit-text-stroke:0.2px currentColor;font-weight:700;-webkit-text-stroke:0;color:#f59a55;-webkit-text-stroke:0;">tance Y Pos</div>
<div class="t" style="right:1062.46px;top:302.9px;font-size:11.5px;letter-spacing:0.142px;color:#f1f2f4;-webkit-text-stroke:0.2px currentColor;">Value<span style="color:#f4605a">.x</span></div>
<div class="abs" style="left:692.4px;top:303.70px;width:5.5px;height:15.2px;background:#f4605a;border-radius:2px 0 0 2px;"></div>
<div class="abs" style="left:560px;top:568px;width:115px;height:78px;background:#4b515c;border-radius:6px;box-shadow:0 1px 4px rgba(0,0,0,.55);overflow:hidden"><div style="box-sizing:content-box;height:49px;background:#3a7268;border-bottom:2px solid #40444e"></div></div>
<div class="t" style="left:604px;top:576px;font-size:11.5px;letter-spacing:0.350px;color:#f1f2f4;-webkit-text-stroke:0.2px currentColor;">.</div>
<div class="t" style="right:1099.58px;top:592.5px;font-size:12.4px;letter-spacing:0.420px;color:#f1f2f4;-webkit-text-stroke:0.2px currentColor;font-weight:700;-webkit-text-stroke:0;color:#f59a55;-webkit-text-stroke:0;">ce Scale</div>
<div class="t" style="right:1085.06px;top:621.9px;font-size:11.5px;letter-spacing:0.142px;color:#f1f2f4;-webkit-text-stroke:0.2px currentColor;">Value<span style="color:#f4605a">.x</span></div>
<div class="abs" style="left:669.5px;top:622.60px;width:5.5px;height:15.2px;background:#f4605a;border-radius:2px 0 0 2px;"></div>
<div class="abs" style="left:1265px;top:381px;width:258.6px;height:336px;background:#4b515c;border-radius:5px;box-shadow:0 1px 4px rgba(0,0,0,.55);overflow:hidden"><div style="box-sizing:content-box;height:49px;background:#66384f;border-bottom:2px solid #40444e"></div></div>
<div class="abs" style="left:1272.3px;top:388.3px;width:35.4px;height:35px;border-radius:7px;background:#2e313b"></div>
<svg style="left:1276.5px;top:394px" width="27" height="24"><rect x="0.5" y="9" width="10.7" height="5.8" rx="1.4" fill="#d9dfe7"/><rect x="16.5" y="0.5" width="9.8" height="5.8" rx="1.4" fill="#d9dfe7"/><rect x="16.5" y="17.4" width="9.8" height="5.9" rx="1.4" fill="#d9dfe7"/><path d="M10.8 11.9 H12.4 M17.6 3.5 H17 C13.8 3.5 15 9.6 12.2 11.9 C15 14.2 13.8 20.3 17 20.3 H17.6" stroke="#f0d24a" stroke-width="2.8" fill="none" stroke-linejoin="round"/></svg>
<div class="t" style="left:1314px;top:398.5px;font-size:11.8px;letter-spacing:0.562px;color:#f1f2f4;-webkit-text-stroke:0.2px currentColor;font-weight:700;-webkit-text-stroke:0;">Texture To Instance Transform</div>
<div class="t" style="right:237.10px;top:435.8px;font-size:11.5px;letter-spacing:0.596px;color:#f1f2f4;-webkit-text-stroke:0.2px currentColor;">World Position<span style="color:#3bc1f7">.xyz</span></div>
<div class="abs" style="left:1518.1px;top:435.70px;width:5.5px;height:15.2px;background:#3bc1f7;border-radius:2px 0 0 2px;"></div>
<div class="t" style="right:237.11px;top:455.6px;font-size:11.5px;letter-spacing:0.592px;color:#f1f2f4;-webkit-text-stroke:0.2px currentColor;">World Normal<span style="color:#3bc1f7">.xyz</span></div>
<div class="abs" style="left:1518.1px;top:455.50px;width:5.5px;height:15.2px;background:#3bc1f7;border-radius:2px 0 0 2px;"></div>
<div class="t" style="right:237.18px;top:475.40000000000003px;font-size:11.5px;letter-spacing:0.525px;color:#f1f2f4;-webkit-text-stroke:0.2px currentColor;">World Tangent<span style="color:#3bc1f7">.xyz</span></div>
<div class="abs" style="left:1518.1px;top:475.30px;width:5.5px;height:15.2px;background:#3bc1f7;border-radius:2px 0 0 2px;"></div>
<div class="t" style="left:1273.8px;top:495.09999999999997px;font-size:11.5px;letter-spacing:0.575px;color:#f1f2f4;-webkit-text-stroke:0.2px currentColor;">Position Modifier<span style="color:#3bc1f7">.xyz</span></div>
<div class="abs" style="left:1265px;top:495.10px;width:5.5px;height:15.2px;background:#3bc1f7;border-radius:0 2px 2px 0;"></div>
<div class="t" style="left:1273.8px;top:514.9px;font-size:11.5px;letter-spacing:0.464px;color:#f1f2f4;-webkit-text-stroke:0.2px currentColor;">Scale Modifier<span style="color:#f4605a">.x</span></div>
<div class="abs" style="left:1265px;top:514.90px;width:5.5px;height:15.2px;background:#f4605a;border-radius:0 2px 2px 0;"></div>
<div class="t" style="left:1273.8px;top:534.6999999999999px;font-size:11.5px;letter-spacing:0.657px;color:#f1f2f4;-webkit-text-stroke:0.2px currentColor;">TransformScaleTex</div>
<div class="abs" style="left:1265px;top:534.70px;width:5.5px;height:15.2px;background:#d9820a;border-radius:0 2px 2px 0;"></div>
<div class="t" style="left:1273.8px;top:554.5px;font-size:11.5px;letter-spacing:0.673px;color:#f1f2f4;-webkit-text-stroke:0.2px currentColor;">TransformTexPosRot</div>
<div class="abs" style="left:1265px;top:554.50px;width:5.5px;height:15.2px;background:#d9820a;border-radius:0 2px 2px 0;"></div>
<div class="t" style="left:1273.8px;top:574.3px;font-size:11.5px;letter-spacing:0.344px;color:#f1f2f4;-webkit-text-stroke:0.2px currentColor;">Max Instance Count<span style="color:#f4605a">.x</span></div>
<div class="abs" style="left:1265px;top:574.30px;width:5.5px;height:15.2px;background:#ffffff;border-radius:0 2px 2px 0;"></div>
<div class="t" style="left:1273.8px;top:594.1px;font-size:11.5px;letter-spacing:0.489px;color:#f1f2f4;-webkit-text-stroke:0.2px currentColor;">minPos<span style="color:#f4605a">.x</span></div>
<div class="abs" style="left:1265px;top:594.10px;width:5.5px;height:15.2px;background:#ffffff;border-radius:0 2px 2px 0;"></div>
<div class="t" style="left:1273.8px;top:613.9px;font-size:11.5px;letter-spacing:0.389px;color:#f1f2f4;-webkit-text-stroke:0.2px currentColor;">maxPos<span style="color:#f4605a">.x</span></div>
<div class="abs" style="left:1265px;top:613.90px;width:5.5px;height:15.2px;background:#ffffff;border-radius:0 2px 2px 0;"></div>
<div class="t" style="left:1273.8px;top:633.6999999999999px;font-size:11.5px;letter-spacing:0.366px;color:#f1f2f4;-webkit-text-stroke:0.2px currentColor;">minScale<span style="color:#f4605a">.x</span></div>
<div class="abs" style="left:1265px;top:633.70px;width:5.5px;height:15.2px;background:#ffffff;border-radius:0 2px 2px 0;"></div>
<div class="t" style="left:1273.8px;top:653.5px;font-size:11.5px;letter-spacing:0.356px;color:#f1f2f4;-webkit-text-stroke:0.2px currentColor;">maxScale<span style="color:#f4605a">.x</span></div>
<div class="abs" style="left:1265px;top:653.50px;width:5.5px;height:15.2px;background:#ffffff;border-radius:0 2px 2px 0;"></div>
<div class="t" style="left:1273.8px;top:673.3px;font-size:11.5px;letter-spacing:0.429px;color:#f1f2f4;-webkit-text-stroke:0.2px currentColor;">minRot<span style="color:#f4605a">.x</span></div>
<div class="abs" style="left:1265px;top:673.30px;width:5.5px;height:15.2px;background:#ffffff;border-radius:0 2px 2px 0;"></div>
<div class="t" style="left:1273.8px;top:693.1px;font-size:11.5px;letter-spacing:0.348px;color:#f1f2f4;-webkit-text-stroke:0.2px currentColor;">manRot<span style="color:#f4605a">.x</span></div>
<div class="abs" style="left:1265px;top:693.10px;width:5.5px;height:15.2px;background:#ffffff;border-radius:0 2px 2px 0;"></div>
<div class="t" style="left:1144px;top:926.3px;font-size:10.8px;letter-spacing:0.730px;color:#f1f2f4;-webkit-text-stroke:0.2px currentColor;text-shadow:0 0 2px #000">Zoom 110%</div>
</div>
<svg style="left:615.5px;top:27.5px" width="13" height="13"><path d="M6.5 0.5V12.5M0.5 6.5H12.5" stroke="#e8eaee" stroke-width="1.8" fill="none"/></svg>
<svg style="left:650px;top:26px" width="16" height="16"><g stroke="#e8eaee" fill="none"><path d="M3.4 0 V16 M0 3.3 H16 M6.4 0 V3.3 M9.5 0 V3.3 M12.6 0 V3.3 M0 6.5 H3.4 M0 9.6 H3.4 M0 12.6 H3.4" stroke-width="1"/><path d="M6.9 8.4 V11.6 A3.55 3.55 0 0 0 14 11.6 V8.4" stroke-width="2.3"/><path d="M6.9 5.1 V6.8 M14 5.1 V6.8" stroke-width="2.3"/></g></svg>
<svg style="left:674px;top:26px" width="16" height="16"><rect x="1.5" y="1.6" width="13" height="12.9" fill="none" stroke="#6c737e" stroke-width="1.2"/><rect x="5.4" y="5.4" width="7.4" height="7.7" rx="2" fill="#575e69"/><rect x="3.1" y="3.1" width="7.7" height="7.7" rx="2" fill="#6c737e"/><circle cx="1.5" cy="1.6" r="1.15" fill="#6c737e"/><circle cx="1.5" cy="14.5" r="1.15" fill="#6c737e"/><circle cx="14.5" cy="1.6" r="1.15" fill="#6c737e"/><circle cx="14.5" cy="14.5" r="1.15" fill="#6c737e"/></svg>
<svg style="left:698px;top:27px" width="17" height="15"><path d="M8.2 0.5 C3.8 0.5 0.5 2.9 0.5 6 C0.5 8 2 9.8 4.2 10.7 L3.6 14.2 L7.4 11.4 C7.7 11.4 7.9 11.5 8.2 11.5 C12.6 11.5 16 9.1 16 6 C16 2.9 12.6 0.5 8.2 0.5 Z" fill="#6c737e"/><circle cx="4.8" cy="6" r="1.05" fill="#2c303a"/><circle cx="8.2" cy="6" r="1.05" fill="#2c303a"/><circle cx="11.6" cy="6" r="1.05" fill="#2c303a"/></svg>
<svg style="left:722px;top:26px" width="16" height="16"><circle cx="8" cy="8" r="7.1" fill="none" stroke="#6c737e" stroke-width="1.7"/><path d="M8 4 L11.2 8 H9.1 V11.8 H6.9 V8 H4.8 Z" fill="#6c737e"/></svg>
<div class="abs" style="left:612px;top:57px;width:62px;height:20px;border-radius:4px;background:#4a5768"></div>
<svg style="left:621.5px;top:61px" width="12" height="12"><rect x="0.6" y="0.6" width="10.8" height="10.8" rx="1.6" fill="none" stroke="#f08bc4" stroke-width="1.1"/><path d="M0.8 4.4 Q3 2.6 4.6 4.6 L11 10.6 M2.4 11 L5.4 7.4 L8.4 10.8" fill="none" stroke="#f08bc4" stroke-width="1"/></svg>
<div class="t " style="left:638px;top:59.8px;font-size:11px;letter-spacing:0.043px">Color</div>
<svg class="ic" style="left:683.5px;top:63.5px;color:#e8eaee" width="5" height="8"><use href="#chr"/></svg>
<div class="abs" style="left:698.5px;top:57px;width:141px;height:20px;border-radius:6px;background:#1b1e24"></div>
<div class="t " style="left:707px;top:59.8px;font-size:11px;letter-spacing:-0.018px">Modify Each Instance</div>
<svg style="left:820px;top:65.5px;color:#7d8591" width="8" height="5"><path fill="none" stroke="currentColor" stroke-width="1.4" stroke-linecap="round" stroke-linejoin="round" d="M0.8 0.8 L4 4 L7.2 0.8"/></svg>
<div class="abs" style="left:1481px;top:24px;width:200px;height:20px;background:#1e2128;border-radius:2px"></div>
<svg style="left:1488.5px;top:28px" width="13" height="13"><circle cx="7" cy="5.2" r="3.6" stroke="#e8eaee" stroke-width="1.9" fill="none"/><path d="M9.8 8 L12.2 10.6" stroke="#e8eaee" stroke-width="2" stroke-linecap="round"/><path d="M0.5 8 V12 H4.5 Z" fill="#e8eaee"/></svg>
<div class="t " style="left:1511px;top:27.700000000000003px;font-style:italic;color:#8e96a3;font-size:11.7px">Search...</div>
<svg style="left:1624px;top:31.5px;color:#757d89" width="8" height="5"><path fill="none" stroke="currentColor" stroke-width="1.4" stroke-linecap="round" stroke-linejoin="round" d="M0.8 4.2 L4 1 L7.2 4.2"/></svg>
<div class="t " style="left:1638px;top:27.299999999999997px;font-size:11.7px;color:#e8eaee">0/0</div>
<svg style="left:1662px;top:32.5px;color:#757d89" width="8" height="5"><path fill="none" stroke="currentColor" stroke-width="1.4" stroke-linecap="round" stroke-linejoin="round" d="M0.8 0.8 L4 4 L7.2 0.8"/></svg>
<div class="abs" style="left:1685px;top:24px;width:20px;height:19.8px;background:#7f8a99;border-radius:4.5px"></div>
<svg style="left:1688px;top:26.9px" width="14.2" height="14.2"><rect x="0.9" y="0.9" width="12.4" height="12.4" rx="1.8" fill="#8e99a8" stroke="#fff" stroke-width="1.8"/><path d="M3 7 H4.6 V9.4 H7 V11.2 H3 Z" fill="#fff"/></svg>
<svg style="left:1724px;top:26.6px" width="14.4" height="14.6"><path d="M0.6 7.2 L7.2 1 L13.8 7.2 M2.8 6.4 V13.6 H11.6 V6.4" fill="none" stroke="#d3e3f2" stroke-width="1.6" stroke-linejoin="miter"/></svg>
<div class="abs" style="left:1512.4px;top:57px;width:228.8px;height:180.6px;background:rgba(31,33,38,0.93);border:2.1px solid #5f636b"></div>
<svg style="left:0;top:0" width="1752" height="940"><path d="M1567 64 C1569.5 64 1569.5 67 1572 67" stroke="#ee5548" stroke-width="1.1" fill="none"/><path d="M1567 69 C1569.5 69 1569.5 68.2 1572 68.2" stroke="#b36ae2" stroke-width="1.1" fill="none"/><path d="M1578.8 65.8 C1581.5 65.8 1580 74.4 1582.1 74.4" stroke="#b36ae2" stroke-width="1.1" fill="none"/><path d="M1564 75.4 C1573.0 75.4 1573.0 75 1582.1 75" stroke="#b36ae2" stroke-width="1.2" fill="none"/><path d="M1567 80.6 C1590.6 80.6 1590.6 72.5 1614.2 72.5" stroke="#2e3036" stroke-width="0.7" fill="none"/><path d="M1567 80.6 C1590.6 80.6 1590.6 92 1614.2 92" stroke="#2e3036" stroke-width="0.7" fill="none"/><path d="M1587.9 72.8 L1597.3 72 L1602.7 71.6 L1614.2 72.2" stroke="#35b4ee" stroke-width="1.6" fill="none"/><linearGradient id="pb" x1="0" x2="1"><stop offset="0.25" stop-color="#b36ae2"/><stop offset="0.6" stop-color="#35b4ee"/></linearGradient><path d="M1587.9 72.8 C1601 73 1601 92 1614.2 92.2" stroke="url(#pb)" stroke-width="1" fill="none"/><path d="M1575 88.8 C1590 89.5 1600 93.5 1614.2 94.2" stroke="url(#pb)" stroke-width="1" fill="none"/><path d="M1575 94 C1577.5 94 1576.8 99.6 1579.3 99.4" stroke="#b36ae2" stroke-width="1.1" fill="none"/><rect x="1585.8" y="95.2" width="28.8" height="3.8" fill="#ee5548"/><rect x="1594" y="97.2" width="20.6" height="1.8" fill="#35b4ee"/><path d="M1622.9 71.2 C1634.1 71.2 1634.1 90.2 1645.2 90.2" stroke="#b36ae2" stroke-width="1" fill="none"/><rect x="1624.1" y="90.3" width="21.1" height="1.5" fill="#b36ae2"/><path d="M1625.9 110.8 C1635.6 110.8 1635.6 91.6 1645.2 91.6" stroke="#ee5548" stroke-width="0.9" fill="none"/><path d="M1653 88.8 C1668 89 1670 161 1687.2 164.5" stroke="#b36ae2" stroke-width="1.1" fill="none"/><rect x="1558.2" y="61" width="8.6" height="3.8" fill="#4a4f59"/><rect x="1558.2" y="61" width="8.6" height="2.3" fill="#2f6e62"/><rect x="1561.2" y="61.8" width="1.6" height="0.8" fill="#f59a55"/><rect x="1557.2" y="66.1" width="9.6" height="3.8" fill="#4a4f59"/><rect x="1557.2" y="66.1" width="9.6" height="2.3" fill="#2f6e62"/><rect x="1560.2" y="66.89999999999999" width="1.6" height="0.8" fill="#f59a55"/><rect x="1558.2" y="72" width="8.8" height="3.9" fill="#4a4f59"/><rect x="1558.2" y="72" width="8.8" height="2.3" fill="#2f6e62"/><rect x="1559.2" y="72.8" width="1.6" height="0.8" fill="#f59a55"/><rect x="1558.2" y="78.1" width="8.8" height="3.7" fill="#4a4f59"/><rect x="1558.2" y="78.1" width="8.8" height="2.2" fill="#2f6e62"/><rect x="1560.7" y="78.89999999999999" width="1.6" height="0.8" fill="#f59a55"/><rect x="1565.1" y="85.9" width="9.9" height="3.9" fill="#4a4f59"/><rect x="1565.1" y="85.9" width="9.9" height="2.3" fill="#2f6e62"/><rect x="1565.1" y="91" width="9.9" height="3.8" fill="#4a4f59"/><rect x="1565.1" y="91" width="9.9" height="2.3" fill="#2f6e62"/><rect x="1569.1" y="91.8" width="1.6" height="0.8" fill="#f59a55"/><rect x="1617.1" y="108" width="8.8" height="3.8" fill="#4a4f59"/><rect x="1617.1" y="108" width="8.8" height="2.3" fill="#2f6e62"/><rect x="1619.6" y="108.8" width="1.6" height="0.8" fill="#f59a55"/><rect x="1572.1" y="63.1" width="6.7" height="6.1" fill="#4a4f59"/><rect x="1572.1" y="63.1" width="6.7" height="2.2" fill="#3f434d"/><rect x="1582.1" y="70.1" width="5.8" height="5.6" fill="#4a4f59"/><rect x="1582.1" y="70.1" width="5.8" height="2.2" fill="#3f434d"/><rect x="1597.3" y="68.2" width="5.4" height="4.3" fill="#4a4f59"/><rect x="1597.3" y="68.2" width="5.4" height="2.2" fill="#3f434d"/><rect x="1614.2" y="68.2" width="8.7" height="5.7" fill="#4a4f59"/><rect x="1614.2" y="68.2" width="8.7" height="2.2" fill="#3f434d"/><rect x="1614.2" y="88.1" width="9.9" height="10.9" fill="#4a4f59"/><rect x="1614.2" y="88.1" width="9.9" height="2.2" fill="#3f434d"/><rect x="1579.3" y="93.1" width="6.5" height="6.7" fill="#4a4f59"/><rect x="1579.3" y="93.1" width="6.5" height="2.2" fill="#3f434d"/><rect x="1645.2" y="86.2" width="7.8" height="5.8" fill="#4a4f59"/><rect x="1645.2" y="86.2" width="7.8" height="2.2" fill="#3f434d"/><rect x="1575.8" y="68" width="1.0" height="0.9" fill="#e8e8e8"/><rect x="1563" y="75" width="1.0" height="0.9" fill="#e8e8e8"/><rect x="1581.7" y="74" width="1.0" height="0.9" fill="#e8e8e8"/><rect x="1572" y="89" width="1.0" height="0.9" fill="#e8e8e8"/><rect x="1619" y="98" width="1.0" height="0.9" fill="#e8e8e8"/><rect x="1598" y="69" width="1.0" height="0.9" fill="#e8e8e8"/><rect x="1600.5" y="69" width="1.0" height="0.9" fill="#e8e8e8"/><rect x="1615" y="69" width="1.0" height="0.9" fill="#e8e8e8"/><rect x="1617.2" y="69" width="1.0" height="0.9" fill="#e8e8e8"/><rect x="1586" y="71" width="1.0" height="0.9" fill="#e8e8e8"/><rect x="1581" y="94" width="1.0" height="0.9" fill="#e8e8e8"/><rect x="1645.3" y="91" width="1.0" height="0.9" fill="#e8e8e8"/><path d="M1585.9 143.9 C1591.5 143.9 1591.5 152.2 1597.1 152.2" stroke="#ee5548" stroke-width="0.9" fill="none"/><path d="M1585.9 149 C1591.5 149 1591.5 152.2 1597.1 152.2" stroke="#ee5548" stroke-width="0.9" fill="none"/><path d="M1585.9 154.4 C1591.5 154.4 1591.5 152.2 1597.1 152.2" stroke="#ee5548" stroke-width="0.9" fill="none"/><path d="M1586.8 167 C1591.9 167 1591.9 173.2 1597.1 173.2" stroke="#ee5548" stroke-width="0.9" fill="none"/><path d="M1586.8 171.2 C1591.9 171.2 1591.9 173.2 1597.1 173.2" stroke="#ee5548" stroke-width="0.9" fill="none"/><path d="M1586.8 175.3 C1591.9 175.3 1591.9 173.2 1597.1 173.2" stroke="#ee5548" stroke-width="0.9" fill="none"/><path d="M1568.1 157 C1573.0 157 1573.0 154.8 1578 154.8" stroke="#2e3036" stroke-width="0.7" fill="none"/><path d="M1568.1 162 C1573.0 162 1573.0 165.8 1578 165.8" stroke="#2e3036" stroke-width="0.7" fill="none"/><path d="M1568.1 157 C1573.0 157 1573.0 165.8 1578 165.8" stroke="#2e3036" stroke-width="0.7" fill="none"/><path d="M1568.1 162 C1573.0 162 1573.0 154.8 1578 154.8" stroke="#2e3036" stroke-width="0.7" fill="none"/><path d="M1607 149.3 C1610.1 149.3 1610.1 154 1613.2 154" stroke="#ee5548" stroke-width="0.9" fill="none"/><rect x="1607" y="169.2" width="23.1" height="1.6" fill="#ee5548"/><path d="M1619 152 C1624.5 152 1624.5 154 1630.1 154" stroke="#35b4ee" stroke-width="0.9" fill="none"/><path d="M1622 159.2 C1626.0 159.2 1626.0 154.6 1630.1 154.6" stroke="#ee5548" stroke-width="0.9" fill="none"/><path d="M1621.9 174.2 C1626.0 174.2 1626.0 170.7 1630.1 170.7" stroke="#ee5548" stroke-width="0.9" fill="none"/><path d="M1638.1 151.6 C1645 151.6 1642 168 1649.1 168.2" stroke="#35b4ee" stroke-width="1.1" fill="none"/><path d="M1638.1 167.7 C1643.6 167.7 1643.6 168.5 1649.1 168.5" stroke="#ee5548" stroke-width="0.9" fill="none"/><path d="M1617.8 190.3 C1632 189.3 1638 171.5 1649.1 170.4" stroke="#f29d0a" stroke-width="1.1" fill="none"/><path d="M1617.8 195.6 C1632 194.6 1638 171.5 1649.1 170.4" stroke="#f29d0a" stroke-width="1.1" fill="none"/><path d="M1617.8 201.5 C1628.0 200.5 1640.0 173.0 1649.1 171.0" stroke="#ee5548" stroke-width="1.1" fill="none"/><path d="M1617.8 206.7 C1628.8 205.7 1639.7 173.8 1649.1 171.6" stroke="#ee5548" stroke-width="1.1" fill="none"/><path d="M1617.8 211.7 C1629.6 210.7 1639.4 174.6 1649.1 172.2" stroke="#ee5548" stroke-width="1.1" fill="none"/><path d="M1617.8 217.5 C1630.4 216.5 1639.1 175.4 1649.1 172.8" stroke="#ee5548" stroke-width="1.1" fill="none"/><path d="M1617.8 222.8 C1631.2 221.8 1638.8 176.2 1649.1 173.4" stroke="#ee5548" stroke-width="1.1" fill="none"/><path d="M1617.8 228.6 C1632.0 227.6 1638.5 177.0 1649.1 174.0" stroke="#ee5548" stroke-width="1.1" fill="none"/><path d="M1617.8 233 C1632.8 232 1638.2 177.8 1649.1 174.6" stroke="#ee5548" stroke-width="1.1" fill="none"/><rect x="1662" y="164.4" width="25.2" height="3.8" fill="#35b4ee"/><rect x="1578" y="141.9" width="7.9" height="3.9" fill="#4a4f59"/><rect x="1578" y="141.9" width="7.9" height="2.3" fill="#2f6e62"/><rect x="1578" y="147" width="7.9" height="3.8" fill="#4a4f59"/><rect x="1578" y="147" width="7.9" height="2.3" fill="#2f6e62"/><rect x="1578" y="152" width="7.9" height="4.0" fill="#4a4f59"/><rect x="1578" y="152" width="7.9" height="2.4" fill="#2f6e62"/><rect x="1578" y="163.9" width="8.8" height="4.1" fill="#4a4f59"/><rect x="1578" y="163.9" width="8.8" height="2.5" fill="#2f6e62"/><rect x="1578" y="169" width="8.8" height="3.5" fill="#4a4f59"/><rect x="1578" y="169" width="8.8" height="2.1" fill="#2f6e62"/><rect x="1580" y="169.8" width="1.6" height="0.8" fill="#f59a55"/><rect x="1578" y="173.1" width="8.8" height="3.7" fill="#4a4f59"/><rect x="1578" y="173.1" width="8.8" height="2.2" fill="#2f6e62"/><rect x="1580.5" y="173.9" width="1.6" height="0.8" fill="#f59a55"/><rect x="1561.1" y="154" width="7.0" height="3.9" fill="#4a4f59"/><rect x="1561.1" y="154" width="7.0" height="2.4" fill="#3f6fa8"/><rect x="1561.1" y="159.3" width="7.0" height="4.6" fill="#4a4f59"/><rect x="1561.1" y="159.3" width="7.0" height="2.5" fill="#3f6fa8"/><rect x="1597.1" y="146.2" width="9.9" height="7.8" fill="#4a4f59"/><rect x="1597.1" y="146.2" width="9.9" height="2.2" fill="#6a3550"/><rect x="1597.1" y="167.2" width="9.9" height="7.6" fill="#4a4f59"/><rect x="1597.1" y="167.2" width="9.9" height="2.2" fill="#6a3550"/><rect x="1613.2" y="149.1" width="5.5" height="5.7" fill="#4a4f59"/><rect x="1613.2" y="149.1" width="5.5" height="2.2" fill="#3f434d"/><rect x="1613.2" y="156" width="9.7" height="3.8" fill="#4a4f59"/><rect x="1613.2" y="156" width="9.7" height="2.3" fill="#2f6e62"/><rect x="1612" y="171" width="9.9" height="3.8" fill="#4a4f59"/><rect x="1612" y="171" width="9.9" height="2.3" fill="#2f6e62"/><rect x="1614" y="171.8" width="1.6" height="0.8" fill="#f59a55"/><rect x="1630.1" y="149.3" width="8.0" height="5.5" fill="#4a4f59"/><rect x="1630.1" y="149.3" width="8.0" height="2.2" fill="#3f434d"/><rect x="1630.1" y="164.9" width="8.0" height="6.1" fill="#4a4f59"/><rect x="1630.1" y="164.9" width="8.0" height="2.2" fill="#3f434d"/><rect x="1649.1" y="162.2" width="12.9" height="15.6" fill="#4a4f59"/><rect x="1649.1" y="162.2" width="12.9" height="2.2" fill="#6a3550"/><rect x="1649.1" y="175" width="0.9" height="2.8" fill="#e8e8e8"/><rect x="1650.8" y="176" width="0.8" height="1.8" fill="#e8e8e8"/><rect x="1687.2" y="161.8" width="8.8" height="6.2" fill="#4a4f59"/><rect x="1687.2" y="161.8" width="8.8" height="2.2" fill="#5b4a9a"/><rect x="1600" y="147" width="1.1" height="0.9" fill="#e8e8e8"/><rect x="1602" y="147" width="1.1" height="0.9" fill="#e8e8e8"/><rect x="1604" y="147" width="1.1" height="0.9" fill="#e8e8e8"/><rect x="1600" y="168" width="1.1" height="0.9" fill="#e8e8e8"/><rect x="1602" y="168" width="1.1" height="0.9" fill="#e8e8e8"/><rect x="1604" y="168" width="1.1" height="0.9" fill="#e8e8e8"/><rect x="1652" y="163" width="1.1" height="0.9" fill="#e8e8e8"/><rect x="1655" y="163" width="1.1" height="0.9" fill="#e8e8e8"/><rect x="1658" y="163" width="1.1" height="0.9" fill="#e8e8e8"/><rect x="1579" y="143" width="1.1" height="0.9" fill="#e8e8e8"/><rect x="1579" y="148" width="1.1" height="0.9" fill="#e8e8e8"/><rect x="1579" y="153" width="1.1" height="0.9" fill="#e8e8e8"/><rect x="1579" y="165" width="1.1" height="0.9" fill="#e8e8e8"/><rect x="1614.2" y="150" width="1.1" height="0.9" fill="#e8e8e8"/><rect x="1616" y="150" width="1.1" height="0.9" fill="#e8e8e8"/><rect x="1565" y="157" width="1.1" height="0.9" fill="#e8e8e8"/><rect x="1565" y="162.8" width="1.1" height="0.9" fill="#e8e8e8"/><rect x="1606.1" y="187" width="11.7" height="3.9" fill="#4a4f59"/><rect x="1606.1" y="187" width="11.7" height="2.3" fill="#2f6e62"/><rect x="1606.1" y="192" width="11.7" height="3.9" fill="#4a4f59"/><rect x="1606.1" y="192" width="11.7" height="2.3" fill="#2f6e62"/><rect x="1609.1" y="198.1" width="8.7" height="3.9" fill="#4a4f59"/><rect x="1609.1" y="198.1" width="8.7" height="2.3" fill="#2f6e62"/><rect x="1612.6" y="198.9" width="1.6" height="0.8" fill="#f59a55"/><rect x="1610.2" y="203.2" width="7.6" height="3.8" fill="#4a4f59"/><rect x="1610.2" y="203.2" width="7.6" height="2.3" fill="#2f6e62"/><rect x="1612.7" y="204.0" width="1.6" height="0.8" fill="#f59a55"/><rect x="1610.2" y="208.2" width="7.6" height="3.7" fill="#4a4f59"/><rect x="1610.2" y="208.2" width="7.6" height="2.2" fill="#2f6e62"/><rect x="1610.2" y="214" width="7.6" height="3.8" fill="#4a4f59"/><rect x="1610.2" y="214" width="7.6" height="2.3" fill="#2f6e62"/><rect x="1612.7" y="214.8" width="1.6" height="0.8" fill="#f59a55"/><rect x="1610.2" y="219.2" width="7.6" height="3.8" fill="#4a4f59"/><rect x="1610.2" y="219.2" width="7.6" height="2.3" fill="#2f6e62"/><rect x="1610.2" y="225" width="7.6" height="3.9" fill="#4a4f59"/><rect x="1610.2" y="225" width="7.6" height="2.3" fill="#2f6e62"/><rect x="1612.7" y="225.8" width="1.6" height="0.8" fill="#f59a55"/><rect x="1620.4" y="148.3" width="50.6" height="39.2" fill="none" stroke="#5b8ff0" stroke-width="2"/><path d="M1516.8 227 V233 H1523" stroke="#6b7078" stroke-width="1.5" fill="none"/></svg></div></body></html>
